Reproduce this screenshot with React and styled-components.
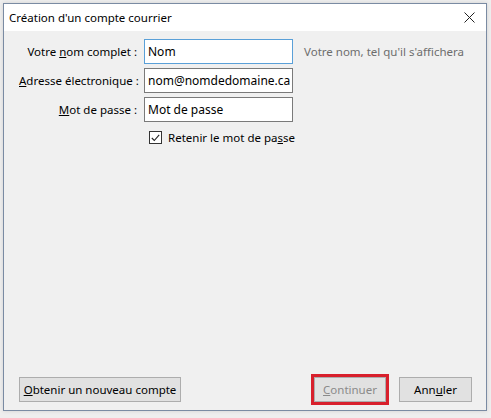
import React from "react";
import styled, { createGlobalStyle } from "styled-components";

const GlobalStyle = createGlobalStyle`
  html, body {
    margin: 0;
    padding: 0;
    background: #ececec;
    font-family: "Noto Sans", "Open Sans", sans-serif;
  }
`;

const Desktop = styled.div`
  width: 491px;
  height: 418px;
  padding: 3px 0 0 3px;
  box-sizing: border-box;
  background: #eeeeee;
`;

const Window = styled.div`
  width: 484px;
  height: 408px;
  box-sizing: border-box;
  border: 1px solid #7a8ba3;
  display: flex;
  flex-direction: column;
  background: #f0f0f0;
  box-shadow: 0 0 4px rgba(0, 0, 0, 0.12);
`;

const TitleBar = styled.div`
  height: 27px;
  flex: none;
  background: #ffffff;
  display: flex;
  align-items: center;
  justify-content: space-between;
  padding: 0 11px 0 5px;
  font-size: 11.5px;
  color: #000;
`;

const Body = styled.div`
  flex: 1;
  display: flex;
  flex-direction: column;
  justify-content: space-between;
  padding: 8px 12px 5px 15px;
`;

const Form = styled.div`
  display: grid;
  grid-template-columns: 118px 149px auto;
  column-gap: 7px;
  row-gap: 4px;
  align-items: center;
  font-size: 11.5px;
`;

const Label = styled.label`
  text-align: right;
  color: #000;
  white-space: nowrap;
`;

const Input = styled.div`
  height: 25px;
  box-sizing: border-box;
  border: 1px solid ${(p) => (p.$focused ? "#5aa0d8" : "#7a7a7a")};
  background: #fff;
  display: flex;
  align-items: center;
  padding: 0 3px;
  font-size: 12px;
  white-space: nowrap;
  overflow: hidden;
`;

const Hint = styled.span`
  color: #6d6d6d;
  padding-left: 4px;
  white-space: nowrap;
`;

const CheckRow = styled.div`
  grid-column: 2 / 4;
  display: flex;
  align-items: center;
  gap: 6px;
  padding: 4px 0 0 5px;
`;

const Box = styled.span`
  width: 11px;
  height: 11px;
  border: 1px solid #333;
  background: #fff;
  display: flex;
  align-items: center;
  justify-content: center;
`;

const Footer = styled.div`
  display: flex;
  align-items: center;
  justify-content: space-between;
`;

const Button = styled.button`
  height: 25px;
  width: ${(p) => p.$w}px;
  padding: 0;
  box-sizing: border-box;
  border: 1px solid #adadad;
  background: #e1e1e1;
  font-family: inherit;
  font-size: 11.5px;
  color: ${(p) => (p.disabled ? "#8a8a8a" : "#000")};
  margin-left: ${(p) => p.$ml || 0}px;
`;

const Highlight = styled.span`
  display: inline-flex;
  border: 3px solid #d8202c;
`;

const RightButtons = styled.div`
  display: flex;
  align-items: center;
  gap: 10px;
  margin-right: 2px;
`;

const Close = () => (
  <svg width="11" height="11" viewBox="0 0 11 11">
    <path d="M0.5 0.5 L10.5 10.5 M10.5 0.5 L0.5 10.5" stroke="#222" strokeWidth="1" />
  </svg>
);

export default function App() {
  return (
    <>
      <GlobalStyle />
      <Desktop>
        <Window>
          <TitleBar>
            <span>Création d'un compte courrier</span>
            <Close />
          </TitleBar>
          <Body>
            <Form>
              <Label>
                Votre <u>n</u>om complet :
              </Label>
              <Input $focused>Nom</Input>
              <Hint>Votre nom, tel qu'il s'affichera</Hint>

              <Label>
                <u>A</u>dresse électronique :
              </Label>
              <Input>nom@nomdedomaine.ca</Input>
              <span />

              <Label>
                <u>M</u>ot de passe :
              </Label>
              <Input>Mot de passe</Input>
              <span />

              <span />
              <CheckRow>
                <Box>
                  <svg width="9" height="8" viewBox="0 0 9 8">
                    <path d="M0.8 4 L3.3 6.5 L8.2 0.8" fill="none" stroke="#222" strokeWidth="1.1" />
                  </svg>
                </Box>
                <span>
                  Retenir le mot de pa<u>s</u>se
                </span>
              </CheckRow>
            </Form>

            <Footer>
              <Button $w={162} $ml={0}>
                <u>O</u>btenir un nouveau compte
              </Button>
              <RightButtons>
                <Highlight>
                  <Button disabled $w={72}>
                    <u>C</u>ontinuer
                  </Button>
                </Highlight>
                <Button $w={73}>
                  Ann<u>u</u>ler
                </Button>
              </RightButtons>
            </Footer>
          </Body>
        </Window>
      </Desktop>
    </>
  );
}
